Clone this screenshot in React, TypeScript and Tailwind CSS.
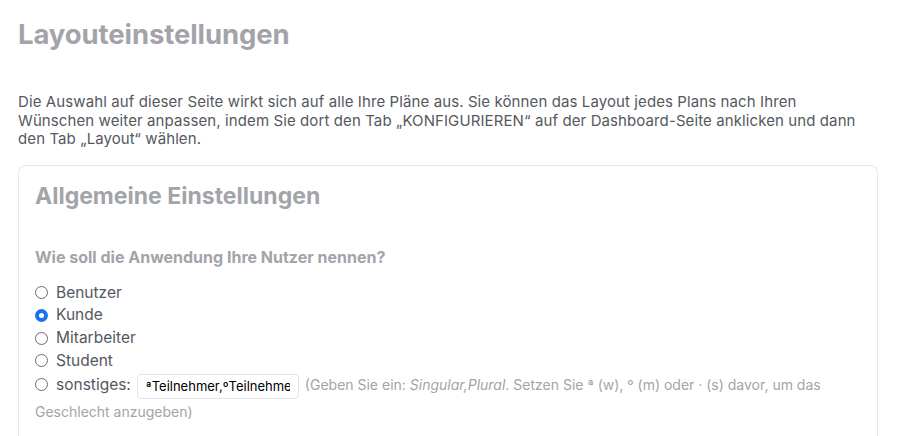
import React from 'react';

const options = ['Benutzer', 'Kunde', 'Mitarbeiter', 'Student'];

function Radio({ checked }: { checked?: boolean }) {
  return checked ? (
    <span className="inline-flex h-[13px] w-[13px] shrink-0 items-center justify-center rounded-full bg-[#1a73e8] align-[-1px]">
      <span className="h-[5px] w-[5px] rounded-full bg-white" />
    </span>
  ) : (
    <span className="inline-block h-[13px] w-[13px] shrink-0 rounded-full border border-[#6b6b6b] bg-white align-[-1px]" />
  );
}

export default function App() {
  return (
    <div className="min-h-[436px] bg-white pl-[18px] pr-[22px] pt-[16px] font-['Inter','Liberation_Sans',sans-serif]">
      <h1 className="text-[27.5px] font-bold leading-[36px] tracking-[-0.1px] text-[#a2a4aa]">Layouteinstellungen</h1>

      <p className="mt-[41px] text-[15px] leading-[18.5px] tracking-[0.1px] text-[#55585e]">
        Die Auswahl auf dieser Seite wirkt sich auf alle Ihre Pläne aus. Sie können das Layout jedes Plans nach Ihren
        <br />
        Wünschen weiter anpassen, indem Sie dort den Tab „KONFIGURIEREN“ auf der Dashboard-Seite anklicken und dann
        <br />
        den Tab „Layout“ wählen.
      </p>

      <div className="mt-[16px] rounded-t-lg border border-b-0 border-[#e6e7ea] px-4 pt-[13px] pb-6">
        <h2 className="text-[23px] font-bold leading-[34px] text-[#a2a4aa]">Allgemeine Einstellungen</h2>

        <h3 className="mt-[34px] text-[16px] font-bold leading-5 text-[#a2a4aa]">Wie soll die Anwendung Ihre Nutzer nennen?</h3>

        <div className="mt-[15px] text-[15.5px] leading-[22.7px] text-[#55585e]">
          {options.map((o) => (
            <label key={o} className="flex items-center gap-[8px]">
              <Radio checked={o === 'Kunde'} />
              <span>{o}</span>
            </label>
          ))}
          <p className="leading-[26px]">
            <Radio />
            <span className="ml-[8px]">sonstiges:</span>
            <input
              readOnly
              defaultValue="ªTeilnehmer,ºTeilnehmer"
              className="mx-[6px] h-[25px] w-[162px] rounded border border-[#e3e4e7] px-2 align-middle text-[13px] text-black outline-none"
            />
            <span className="text-[14px] text-[#a2a4aa]">
              (Geben Sie ein: <i>Singular,Plural</i>. Setzen Sie ª (w), º (m) oder · (s) davor, um das Geschlecht anzugeben)
            </span>
          </p>
        </div>
      </div>
    </div>
  );
}
